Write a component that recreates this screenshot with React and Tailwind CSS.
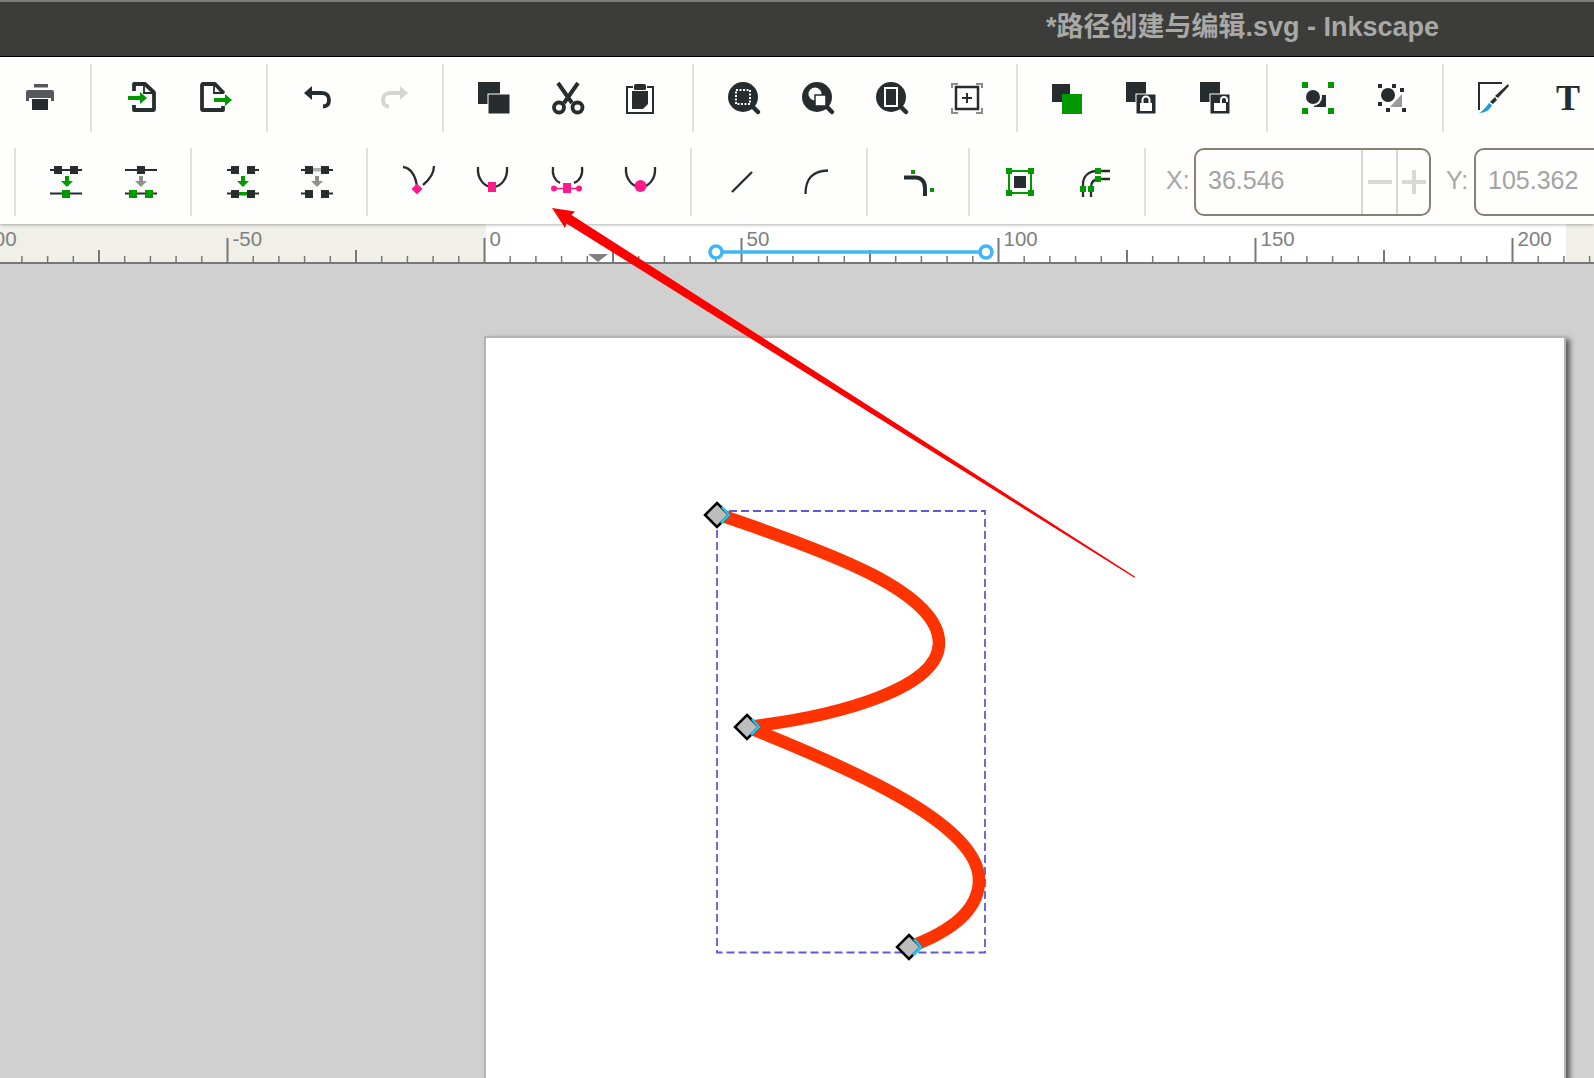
import React from "react";

const DARK = "#272c2e";
const GREEN = "#009900";
const PINK = "#ff1a8c";

const Icon = ({ children }) => (
  <svg viewBox="0 0 32 32" className="w-8 h-8 shrink-0 overflow-visible">
    {children}
  </svg>
);

const Sep = () => <div className="w-[2px] h-[68px] shrink-0 bg-[#e0e0dd]" />;

const Group = ({ children, className = "px-[34px] gap-[42px]" }) => (
  <div className={`flex items-center shrink-0 ${className}`}>{children}</div>
);

// second toolbar sits a pixel to the right of its separators
const Group2 = ({ children }) => <Group className="pl-[35px] pr-[33px] gap-[42px]">{children}</Group>;

/* row 1 */
const Print = () => (
  <Icon>
    <rect x="10" y="2" width="14" height="3.500" fill="#55595b" />
    <path d="M4 8h24a2 2 0 0 1 2 2v9h-3v-3H5v3H2v-9a2 2 0 0 1 2-2z" fill="#55595b" />
    <rect x="8" y="17" width="16" height="11" fill={DARK} />
  </Icon>
);

const Import = () => (
  <Icon>
    <path d="M8 9V2H19L28 10.500V27a1 1 0 0 1-1 1H8V23" fill="none" stroke={DARK} strokeWidth="3.800" strokeLinejoin="round" />
    <path d="M18 2v9h10" fill="none" stroke={DARK} strokeWidth="1.800" />
    <path d="M2 16h13" stroke={GREEN} strokeWidth="4" />
    <path d="M14 10l7 6-7 6z" fill={GREEN} />
  </Icon>
);

const Export = () => (
  <Icon>
    <path d="M23 11V10.500L15 2H3A1 1 0 0 0 2 3V27A1 1 0 0 0 3 28H23V24" fill="none" stroke={DARK} strokeWidth="3.800" strokeLinejoin="round" />
    <path d="M14 2v9h10" fill="none" stroke={DARK} strokeWidth="1.800" />
    <path d="M14 18h12" stroke={GREEN} strokeWidth="4" />
    <path d="M25 12l7 6-7 6z" fill={GREEN} />
  </Icon>
);

const Undo = ({ color = DARK, flip }) => (
  <Icon>
    <g transform={flip ? "translate(34 0) scale(-1 1)" : undefined}>
      <path d="M2 11l8-7v14z" fill={color} />
      <path d="M9 11H20C25 11 27 14 27 18C27 22 25 24.500 21 24.500" fill="none" stroke={color} strokeWidth="3.800" />
    </g>
  </Icon>
);

const Duplicate = () => (
  <Icon>
    <rect x="0" y="0" width="22" height="22" fill={DARK} />
    <rect x="10" y="12" width="22" height="20" fill={DARK} stroke="#fefefc" strokeWidth="1" />
  </Icon>
);

const Cut = () => (
  <Icon>
    <path d="M6 1L20 21M26 1L12 21" stroke={DARK} strokeWidth="4" fill="none" />
    <circle cx="7" cy="25.500" r="5" fill="none" stroke={DARK} strokeWidth="3.800" />
    <circle cx="25.500" cy="25.500" r="5" fill="none" stroke={DARK} strokeWidth="3.800" />
  </Icon>
);

const Paste = () => (
  <Icon>
    <path d="M7 5H1V31H27V5H21" fill="none" stroke={DARK} strokeWidth="2" />
    <rect x="8" y="2" width="12" height="6" rx="1.500" fill={DARK} />
    <path d="M6 9H22V22L17 27H6z" fill={DARK} />
  </Icon>
);

const Lens = ({ children }) => (
  <Icon>
    <circle cx="15" cy="15" r="15" fill={DARK} />
    <path d="M24 24L30 30" stroke={DARK} strokeWidth="4.500" strokeLinecap="round" />
    {children}
  </Icon>
);

const ZoomFit = () => (
  <Icon>
    <path d="M2 6V2H8M26 2H32V6M2 26V31H8M26 31H32V26" fill="none" stroke="#8c8c8c" strokeWidth="2" />
    <rect x="6" y="5" width="22" height="22" fill="none" stroke={DARK} strokeWidth="2.500" />
    <path d="M17 11V21M12 16H22" stroke={DARK} strokeWidth="2" />
  </Icon>
);

const Raise = () => (
  <Icon>
    <rect x="0" y="2" width="18" height="18" fill={DARK} />
    <rect x="10" y="12" width="20" height="20" fill={GREEN} />
  </Icon>
);

const LockIcon = ({ open }) => (
  <Icon>
    <rect x="0" y="0" width="20" height="20" fill={DARK} />
    <rect x="10" y="12" width="20" height="20" fill={DARK} stroke="#fefefc" strokeWidth="1" />
    <rect x="14" y="21" width="12" height="8" fill="#fefefc" />
    {open ? (
      <path d="M21 21V18a3 3 0 0 1 6 0v2" fill="none" stroke="#fefefc" strokeWidth="2" />
    ) : (
      <path d="M16.500 21V18a3.500 3.500 0 0 1 7 0v3" fill="none" stroke="#fefefc" strokeWidth="2" />
    )}
  </Icon>
);

const GroupIcon = () => (
  <Icon>
    <rect x="0" y="0" width="6" height="6" fill={GREEN} />
    <rect x="26" y="0" width="6" height="6" fill={GREEN} />
    <rect x="0" y="26" width="6" height="6" fill={GREEN} />
    <rect x="26" y="26" width="6" height="6" fill={GREEN} />
    <rect x="12" y="13" width="12" height="12" fill={DARK} />
    <circle cx="11" cy="15" r="9" fill="#fefefc" />
    <circle cx="11" cy="15" r="7" fill={DARK} />
  </Icon>
);

const Ungroup = () => (
  <Icon>
    <path d="M26 12V25H14z" fill="#9a9a9a" />
    <circle cx="12" cy="13" r="9" fill="#fefefc" />
    <circle cx="12" cy="13" r="7" fill={DARK} />
    <g fill={DARK}>
      <rect x="2" y="2" width="4" height="4" />
      <rect x="16" y="2" width="4" height="4" />
      <rect x="24" y="6" width="4" height="4" />
      <rect x="2" y="20" width="4" height="4" />
      <rect x="10" y="26" width="4" height="4" />
      <rect x="26" y="26" width="4" height="4" />
    </g>
  </Icon>
);

const DrawIcon = () => (
  <Icon>
    <path d="M24 1H1V28" fill="none" stroke={DARK} strokeWidth="2" />
    <path d="M30 2L31 4L20 16L17 14z" fill={DARK} />
    <path d="M17 15L19 18L15 22L12 20z" fill={DARK} />
    <path d="M11 21L14 23C12 28 7 31 1 31C5 29 8 25 11 21z" fill="#1b9be0" />
  </Icon>
);

/* row 2 */
const nodeAt = (x, y) => <rect x={x} y={y} width="8" height="8" fill={DARK} />;
const greenAt = (x, y) => <rect x={x} y={y} width="8" height="8" fill={GREEN} />;

const DownArrow = ({ color }) => (
  <>
    <rect x="14" y="10" width="4" height="6" fill={color} />
    <path d="M10 15H22L16 21z" fill={color} />
  </>
);

const AlignA = () => (
  <Icon>
    <path d="M-1 4H3M11 4H19M27 4H31M-1 27.500H31" stroke={DARK} strokeWidth="2" />
    {nodeAt(3, 0)}
    {nodeAt(19, 0)}
    <DownArrow color={GREEN} />
    {greenAt(11, 24)}
  </Icon>
);

const AlignB = () => (
  <Icon>
    <path d="M0 4H32M0 27.500H4M12 27.500H20M28 27.500H32" stroke={DARK} strokeWidth="2" />
    {nodeAt(12, 0)}
    <DownArrow color="#8f8f8f" />
    {greenAt(4, 24)}
    {greenAt(20, 24)}
  </Icon>
);

const AlignC = () => (
  <Icon>
    <path d="M0 4H4M28 4H32M0 27.500H4M28 27.500H32" stroke={DARK} strokeWidth="2" />
    <rect x="10" y="26" width="12" height="3.500" fill={GREEN} />
    {nodeAt(4, 0)}
    {nodeAt(20, 0)}
    <DownArrow color={GREEN} />
    {nodeAt(4, 24)}
    {nodeAt(20, 24)}
  </Icon>
);

const AlignD = () => (
  <Icon>
    <path d="M0 4H4M28 4H32M0 27.500H4M28 27.500H32" stroke={DARK} strokeWidth="2" />
    <rect x="10" y="2" width="12" height="3.500" fill="#b0b0b0" />
    {nodeAt(4, 0)}
    {nodeAt(20, 0)}
    <DownArrow color="#8f8f8f" />
    {nodeAt(4, 24)}
    {nodeAt(20, 24)}
  </Icon>
);

const curveStroke = { fill: "none", stroke: DARK, strokeWidth: 2.3 };

const Cusp = () => (
  <Icon>
    <path d="M0 1C8 2 12 8 14 20" {...curveStroke} />
    <path d="M31 0C31 8 26 14 20 19" {...curveStroke} />
    <path d="M14 17.500L19.500 23L14 28.500L8.500 23z" fill={PINK} />
  </Icon>
);

const Smooth = () => (
  <Icon>
    <path d="M1 1C0 14 8 21 15.500 21C23 21 31 14 30 1" {...curveStroke} />
    <rect x="11" y="16" width="8" height="10" fill={PINK} />
  </Icon>
);

const Symmetric = () => (
  <Icon>
    <path d="M2 1C1 9 3 14 9 17" {...curveStroke} />
    <path d="M31 1C32 9 30 14 23 17" {...curveStroke} />
    <path d="M3 22.500H29" stroke={PINK} strokeWidth="1.500" />
    <rect x="12" y="17" width="8" height="10" fill={PINK} />
    <circle cx="3" cy="22.500" r="3" fill={PINK} />
    <circle cx="28" cy="22.500" r="3" fill={PINK} />
  </Icon>
);

const Auto = () => (
  <Icon>
    <path d="M1 1C0 14 8 21 15.500 21C23 21 31 14 30 1" {...curveStroke} />
    <circle cx="15.500" cy="20" r="6" fill={PINK} />
  </Icon>
);

const ToPath = () => (
  <Icon>
    <path d="M1 11.500H12C18 11.500 22 15 22 22V30" fill="none" stroke={DARK} strokeWidth="4" />
    <rect x="8" y="4" width="4" height="4" fill={GREEN} />
    <rect x="27" y="22" width="4" height="4" fill={GREEN} />
  </Icon>
);

const StrokeToPath = () => (
  <Icon>
    <rect x="4" y="5" width="22" height="22" fill="none" stroke={GREEN} strokeWidth="2" />
    <rect x="9" y="10" width="12" height="12" fill={DARK} />
    <rect x="1" y="2" width="6" height="6" fill={GREEN} />
    <rect x="23" y="2" width="6" height="6" fill={GREEN} />
    <rect x="1" y="24" width="6" height="6" fill={GREEN} />
    <rect x="23" y="24" width="6" height="6" fill={GREEN} />
  </Icon>
);

const PathEffect = () => (
  <Icon>
    <path d="M4 31V18C4 10 10 5 18 5H31" {...curveStroke} />
    <path d="M12 31V22C12 16 15 13 20 13H31" {...curveStroke} />
    <rect x="16" y="2" width="6" height="6" fill={GREEN} />
    <rect x="16" y="10" width="6" height="6" fill={GREEN} />
    <rect x="1" y="20" width="6" height="6" fill={GREEN} />
    <rect x="9" y="20" width="6" height="6" fill={GREEN} />
  </Icon>
);

const Spin = ({ value, className }) => (
  <div className={`h-[68px] shrink-0 flex border-2 border-[#8a7f75] rounded-[10px] bg-[#fefefc] overflow-hidden ${className}`}>
    <div className="flex-1 flex items-center pl-[12px] pb-[2px] text-[25px] text-[#a3a3a3]">{value}</div>
    <div className="w-[35px] shrink-0 border-l-2 border-[#dad6d0] flex items-center justify-center">
      <div className="w-[24px] h-[4px] bg-[#d8d8d4]" />
    </div>
    <div className="w-[33px] shrink-0 border-l-2 border-[#dad6d0] flex items-center justify-center relative">
      <div className="w-[24px] h-[4px] bg-[#d8d8d4]" />
      <div className="absolute w-[4px] h-[24px] bg-[#d8d8d4]" />
    </div>
  </div>
);

const UNIT = 5.14;
const ZERO = 484.5;
const ticks = [];
for (let u = -100; u <= 220; u += 5) ticks.push(u);

const Ruler = () => (
  <svg viewBox="0 0 1594 40" className="w-[1594px] h-10 block shrink-0">
    <rect x="0" y="0" width="1594" height="40" fill="#f0f0e9" />
    <rect x="486" y="0" width="1080" height="40" fill="#ffffff" />
    {ticks.map((u) => {
      const x = ZERO + u * UNIT;
      const top = u % 50 === 0 ? 14 : u % 25 === 0 ? 26 : 32;
      return <line key={u} x1={x} x2={x} y1={top} y2="38" stroke="#777777" strokeWidth={u % 25 === 0 ? 2 : 1.500} />;
    })}
    {[-100, -50, 0, 50, 100, 150, 200].map((u) => (
      <text key={u} x={ZERO + u * UNIT + 5} y="22" fontSize="20.500" fill="#808080" fontFamily="'Liberation Sans', sans-serif">
        {u}
      </text>
    ))}
    <rect x="0" y="38" width="1594" height="2" fill="#777777" />
    <path d="M588 30H608L598 38z" fill="#808080" />
  </svg>
);

// drawing that sits over the ruler and the page
const Overlay = () => (
  <svg viewBox="0 0 1594 1078" className="absolute left-0 top-0 w-[1594px] h-[1078px] z-20 pointer-events-none">
    <path d="M716 252H986" stroke="#3fb6f7" strokeWidth="3.500" />
    <circle cx="716" cy="252" r="6" fill="#ffffff" stroke="#3fb6f7" strokeWidth="3.500" />
    <circle cx="986" cy="252" r="6" fill="#ffffff" stroke="#3fb6f7" strokeWidth="3.500" />

    <path d="M552 208L575 211.500L571.500 215L1134.900 576.500L1134.400 577.700L566.500 223.500L565 228z" fill="#ff0000" />

    <rect x="717" y="511" width="268" height="441.500" fill="none" stroke="#5b5bd6" strokeWidth="1.800" strokeDasharray="8 4" />

    <path
      d="M717 514C830 552 939 592 939 643C939 688 840 716 747 727C860 772 979 826 979 880C979 910 950 932 909 947"
      fill="none"
      stroke="#ff3300"
      strokeWidth="12.500"
    />

    {[[717, 515], [747, 727], [909, 947]].map(([x, y]) => (
      <g key={x}>
        <path d={`M${x} ${y - 12}L${x + 12} ${y}L${x} ${y + 12}L${x - 12} ${y}z`} fill="#bdbdbd" stroke="#000000" strokeWidth="2.500" />
        <path d={`M${x + 5} ${y - 8}L${x + 12} ${y}L${x + 4} ${y + 8}`} fill="none" stroke="#19c8f0" strokeWidth="2.500" />
      </g>
    ))}
  </svg>
);

export default function App() {
  return (
    <div className="relative w-[1594px] h-[1078px] overflow-hidden flex flex-col bg-[#d0d0d0] font-['Liberation_Sans','Noto_Sans_CJK_SC',sans-serif]">
      <div className="h-[57px] shrink-0 flex items-center justify-end pr-[155px] pb-[4px] bg-[#3c3c3a] border-t-2 border-t-[#7c7c7a] border-b border-b-black">
        <span className="text-[27px] font-bold text-[#a8a8a6] whitespace-nowrap">*路径创建与编辑.svg - Inkscape</span>
      </div>

      <div className="relative z-10 shadow-[0_1px_3px_rgba(0,0,0,0.3)] bg-[#fefefc]">
        <div className="h-[83px] pb-[1px] flex items-center overflow-hidden">
          <div className="pl-[24px] pr-[34px] shrink-0 flex items-center">
            <Print />
          </div>
          <Sep />
          <Group>
            <Import />
            <Export />
          </Group>
          <Sep />
          <Group>
            <Undo />
            <Undo color="#d5d5d5" flip />
          </Group>
          <Sep />
          <Group>
            <Duplicate />
            <Cut />
            <Paste />
          </Group>
          <Sep />
          <Group>
            <Lens>
              <rect x="8" y="8" width="14" height="14" fill="none" stroke="#ffffff" strokeWidth="2" strokeDasharray="2 1.500" />
            </Lens>
            <Lens>
              <circle cx="13" cy="12" r="6.500" fill="#ffffff" />
              <rect x="13" y="13" width="11" height="11" fill="#ffffff" stroke={DARK} strokeWidth="1.500" />
            </Lens>
            <Lens>
              <rect x="9" y="6" width="12" height="18" fill={DARK} stroke="#ffffff" strokeWidth="2" />
            </Lens>
            <ZoomFit />
          </Group>
          <Sep />
          <Group>
            <Raise />
            <LockIcon />
            <LockIcon open />
          </Group>
          <Sep />
          <Group>
            <GroupIcon />
            <Ungroup />
          </Group>
          <Sep />
          <Group>
            <DrawIcon />
            <svg viewBox="0 0 32 32" className="w-8 h-8 shrink-0 overflow-visible">
              <text x="16" y="28" textAnchor="middle" fontSize="36" fontWeight="700" fill={DARK} fontFamily="'Liberation Serif', serif">
                T
              </text>
            </svg>
          </Group>
        </div>

        <div className="h-[84px] flex items-center pl-[14px] overflow-hidden">
          <Sep />
          <Group2>
            <AlignA />
            <AlignB />
          </Group2>
          <Sep />
          <Group2>
            <AlignC />
            <AlignD />
          </Group2>
          <Sep />
          <Group2>
            <Cusp />
            <Smooth />
            <Symmetric />
            <Auto />
          </Group2>
          <Sep />
          <Group2>
            <Icon>
              <path d="M5 26L25 6" {...curveStroke} />
            </Icon>
            <Icon>
              <path d="M4.500 28C4.500 14 10 5 27 4.500" {...curveStroke} />
            </Icon>
          </Group2>
          <Sep />
          <Group2>
            <ToPath />
          </Group2>
          <Sep />
          <Group2>
            <StrokeToPath />
            <PathEffect />
          </Group2>
          <Sep />
          <span className="ml-[20px] pb-[2px] w-[28px] shrink-0 text-[25px] text-[#a8a8a8]">X:</span>
          <Spin value="36.546" className="w-[237px]" />
          <span className="ml-[15px] pb-[2px] w-[28px] shrink-0 text-[25px] text-[#a8a8a8]">Y:</span>
          <Spin value="105.362" className="w-[237px]" />
        </div>
      </div>

      <Ruler />

      <div className="flex-1 min-h-0 overflow-hidden pl-[484px] pt-[72px]">
        <div className="w-[1082px] h-[800px] bg-white border-2 border-[#b4b4b4] border-b-0 shadow-[4px_3px_5px_rgba(0,0,0,0.55)]" />
      </div>

      <Overlay />
    </div>
  );
}
